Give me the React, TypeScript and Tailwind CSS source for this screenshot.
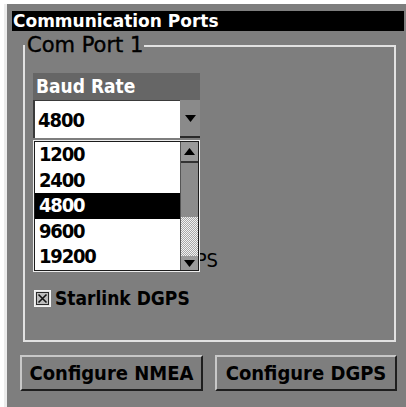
import React from "react";

const RATES = ["1200", "2400", "4800", "9600", "19200"];

function DownArrow({ className }: { className?: string }) {
  return (
    <svg width="11" height="7" viewBox="0 0 11 7" className={className}>
      <path d="M0 0h11L5.5 7z" fill="#000" />
    </svg>
  );
}

function UpArrow() {
  return (
    <svg width="11" height="7" viewBox="0 0 11 7">
      <path d="M0 7h11L5.5 0z" fill="#000" />
    </svg>
  );
}

function CheckBox() {
  return (
    <svg width="17" height="17" viewBox="0 0 17 17" className="shrink-0">
      <rect x="0.5" y="0.5" width="16" height="16" fill="#e4e4e4" stroke="#f4f4f4" />
      <rect x="2.5" y="2.5" width="12" height="12" fill="#bdbdbd" stroke="#2a2a2a" />
      <path d="M4.5 4.5l8 8M12.5 4.5l-8 8" stroke="#111" strokeWidth="1.6" />
    </svg>
  );
}

export default function App() {
  return (
    <div className="w-[406px] h-[407px] bg-white pl-[4px] pt-[4px] flex">
      <div className="flex-1 flex flex-col bg-[#7e7e7e] border-l-[3px] border-[#ececec] font-['DejaVu_Sans_Condensed','DejaVu_Sans',sans-serif] [font-stretch:condensed] text-black">
        {/* Title bar */}
        <div className="ml-[5px] mr-[2px] mt-[7px] h-[20px] bg-black text-white font-['DejaVu_Sans',sans-serif] [font-stretch:normal] font-bold text-[17px] leading-[20px] pl-[1px] whitespace-nowrap overflow-hidden">
          Communication Ports
        </div>

        {/* Com Port group */}
        <fieldset className="ml-[16px] mt-[3px] w-[373px] h-[308px] border-2 border-[#e2e2e2] p-0 m-0">
          <legend className="pl-[2px] pr-[1px] text-[21px] leading-[23px] font-['DejaVu_Sans',sans-serif] [font-stretch:normal] [-webkit-text-stroke:0.4px_#000]">
            Com Port 1
          </legend>
          <div className="pl-[8px] flex flex-col">
            <div className="mt-[16px] w-[167px] h-[27px] bg-[#666666] text-white font-bold text-[19px] leading-[27px] pl-[3px]">
              Baud Rate
            </div>

            {/* Dropdown */}
            <div className="relative w-[167px] h-[38px] flex">
              <div className="flex-1 bg-white border-l-2 border-t border-[#3a3a3a] flex items-center pl-[3px] font-bold text-[20px] tracking-[-1px]">
                4800
              </div>
              <div className="w-[20px] bg-[#8a8a8a] border-b-2 border-[#2a2a2a] flex items-center justify-center">
                <DownArrow />
              </div>

              {/* Open list */}
              <div className="absolute left-0 top-[40px] w-[167px] h-[132px] border border-[#ededed] z-10">
                <div className="w-full h-full border border-[#1c1c1c] bg-white flex">
                  <div className="flex-1 flex flex-col font-bold text-[20px] tracking-[-1.2px]">
                    {RATES.map((r) => (
                      <div
                        key={r}
                        className={
                          r === "4800"
                            ? "h-[25.6px] leading-[25.6px] pl-[4px] bg-black text-white"
                            : "h-[25.6px] leading-[25.6px] pl-[4px]"
                        }
                      >
                        {r}
                      </div>
                    ))}
                  </div>
                  {/* Scrollbar */}
                  <div className="w-[18px] flex flex-col border-l border-[#555]">
                    <div className="h-[21px] bg-[#9a9a9a] border-b-2 border-[#333] flex items-center justify-center">
                      <UpArrow />
                    </div>
                    <div className="h-[54px] bg-[#8c8c8c]" />
                    <div className="flex-1 bg-[image:repeating-conic-gradient(#a8a8a8_0_25%,#f2f2f2_0_50%)] bg-size-[2px_2px]" />
                    <div className="h-[14px] bg-[#9a9a9a] flex items-center justify-center">
                      <DownArrow />
                    </div>
                  </div>
                </div>
              </div>
            </div>

            {/* Row hidden under the list */}
            <div className="mt-[110px] h-[24px] w-[185px] flex justify-end items-center text-[20px] leading-[24px] whitespace-nowrap">
              Enable DGPS
            </div>

            <div className="mt-[15px] h-[23px] flex items-center gap-[4px] pl-[1px]">
              <CheckBox />
              <span className="font-bold text-[19px] leading-[23px]">Starlink DGPS</span>
            </div>
          </div>
        </fieldset>

        {/* Buttons */}
        <div className="mt-[13px] ml-[13px] flex gap-[12px]">
          <button className="w-[183px] h-[36px] bg-[#7e7e7e] border-2 border-t-[#c8c8c8] border-l-[#c8c8c8] border-b-[#1e1e1e] border-r-[#1e1e1e] font-bold text-[20px] text-black whitespace-nowrap">
            Configure NMEA
          </button>
          <button className="w-[182px] h-[36px] bg-[#7e7e7e] border-2 border-t-[#c8c8c8] border-l-[#c8c8c8] border-b-[#1e1e1e] border-r-[#1e1e1e] font-bold text-[20px] text-black whitespace-nowrap">
            Configure DGPS
          </button>
        </div>
      </div>
    </div>
  );
}
